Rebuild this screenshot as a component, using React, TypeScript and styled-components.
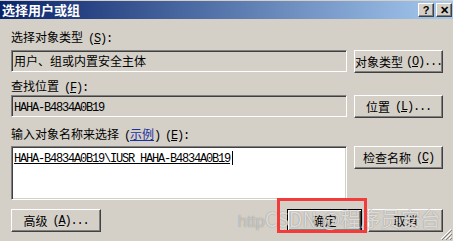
import React from "react"
import styled, { createGlobalStyle } from "styled-components"

const GlobalStyle = createGlobalStyle`
  html, body {
    margin: 0;
    padding: 0;
    background: #d4d0c8;
  }
  body {
    font-family: "Noto Sans CJK SC", "Liberation Sans", sans-serif;
    font-size: 12px;
  }
`

const Window = styled.div`
  position: relative;
  width: 453px;
  height: 241px;
  overflow: hidden;
  background: #d4d0c8;
  color: #000;
`

const TitleBar = styled.div`
  display: flex;
  align-items: center;
  height: 18px;
  margin-top: 1px;
  padding: 0 1px 0 2px;
  background: linear-gradient(to right, #0a246a, #a6caf0);
`

const Title = styled.div`
  color: #fff;
  font-weight: bold;
  font-size: 13px;
  line-height: 18px;
`

const TitleButtons = styled.div`
  display: flex;
  gap: 2px;
  margin-left: auto;
`

const CaptionButton = styled.div`
  width: 14px;
  height: 12px;
  display: flex;
  align-items: center;
  justify-content: center;
  background: #d4d0c8;
  border: 1px solid;
  border-color: #fff #404040 #404040 #fff;
  box-shadow: inset -1px -1px #808080;
  font-family: "Liberation Sans", sans-serif;
  font-weight: bold;
  font-size: 11px;
  line-height: 12px;
`

const Body = styled.div`
  display: flex;
  flex-direction: column;
  padding: 0 10px 0 11px;
`

const Label = styled.div<{ $top: number }>`
  margin-top: ${p => p.$top}px;
  height: 14px;
  line-height: 14px;
  white-space: nowrap;
`

const Mono = styled.span`
  font-family: "Liberation Mono", monospace;
  font-size: 12px;
  letter-spacing: -1.2px;
`

const Gap = styled.span`
  display: inline-block;
  width: 5px;
`

const Link = styled.span`
  color: #1a2fa0;
  text-decoration: underline;
`

const Row = styled.div<{ $top: number }>`
  display: flex;
  align-items: flex-start;
  gap: 7px;
  margin-top: ${p => p.$top}px;
`

const Field = styled.div<{ $h: number; $white?: boolean }>`
  box-sizing: border-box;
  width: 336px;
  height: ${p => p.$h}px;
  padding: 2px 2px;
  background: ${p => (p.$white ? "#fff" : "#d4d0c8")};
  border: 1px solid;
  border-color: #808080 #fff #fff #808080;
  box-shadow: inset 1px 1px #404040, inset -1px -1px #d4d0c8;
  line-height: 16px;
  white-space: nowrap;
  overflow: hidden;
`

const Resolved = styled.span`
  text-decoration: underline;
`

const Caret = styled.span`
  display: inline-block;
  width: 1px;
  height: 14px;
  margin-left: 2px;
  vertical-align: -3px;
  background: #000;
`

const Button = styled.div<{ $w: number; $default?: boolean }>`
  box-sizing: border-box;
  width: ${p => p.$w}px;
  height: 23px;
  display: flex;
  align-items: center;
  justify-content: center;
  background: #d4d0c8;
  border: 1px solid;
  border-color: ${p =>
    p.$default ? "#000" : "#fff #404040 #404040 #fff"};
  box-shadow: ${p =>
    p.$default
      ? "inset 1px 1px #fff, inset -1px -1px #404040, inset -2px -2px #808080"
      : "inset -1px -1px #808080"};
  white-space: nowrap;
  line-height: 14px;
`

const BottomRow = styled.div`
  display: flex;
  margin-top: 9px;
`

const Spacer = styled.div`
  flex: 1;
`

const OkCancel = styled.div`
  display: flex;
  gap: 6px;
`

const Highlight = styled.div`
  position: absolute;
  left: 277px;
  top: 198px;
  width: 84px;
  height: 29px;
  border: 3px solid #f23b3b;
`

const Watermark = styled.div`
  position: absolute;
  left: 238px;
  top: 207px;
  display: flex;
  align-items: baseline;
  white-space: nowrap;
  color: rgba(255, 255, 255, 0.72);
  text-shadow: 0 0 1px rgba(40, 40, 40, 0.55);
  font-size: 20px;
  line-height: 24px;
  pointer-events: none;
`

const WatermarkSmall = styled.span`
  font-family: "Liberation Sans", sans-serif;
  font-size: 16px;
  color: rgba(255, 255, 255, 0.55);
`

const Grip = styled.svg`
  position: absolute;
  right: 1px;
  bottom: 1px;
`

const Key = ({ k }: { k: string }) => (
  <Mono>
    (<u>{k}</u>)
  </Mono>
)

const App = () => (
  <Window>
    <GlobalStyle />
    <TitleBar>
      <Title>选择用户或组</Title>
      <TitleButtons>
        <CaptionButton>?</CaptionButton>
        <CaptionButton>✕</CaptionButton>
      </TitleButtons>
    </TitleBar>
    <Body>
      <Label $top={11}>
        选择对象类型<Gap />
        <Key k="S" />
        <Mono>:</Mono>
      </Label>
      <Row $top={6}>
        <Field $h={22}>用户、组或内置安全主体</Field>
        <Button $w={89}>
          对象类型<Gap />
          <Key k="O" />
          <Mono>...</Mono>
        </Button>
      </Row>
      <Label $top={6}>
        查找位置<Gap />
        <Key k="F" />
        <Mono>:</Mono>
      </Label>
      <Row $top={2}>
        <Field $h={22}>
          <Mono>HAHA-B4834A0B19</Mono>
        </Field>
        <Button $w={89}>
          位置<Gap />
          <Key k="L" />
          <Mono>...</Mono>
        </Button>
      </Row>
      <Label $top={9}>
        输入对象名称来选择<Gap />
        <Mono>(</Mono>
        <Link>示例</Link>
        <Mono>)</Mono>
        <Gap />
        <Key k="E" />
        <Mono>:</Mono>
      </Label>
      <Row $top={5}>
        <Field $h={54} $white>
          <Resolved>
            <Mono>HAHA-B4834A0B19\IUSR_HAHA-B4834A0B19</Mono>
          </Resolved>
          <Caret />
        </Field>
        <Button $w={89}>
          检查名称<Gap />
          <Key k="C" />
        </Button>
      </Row>
      <BottomRow>
        <Button $w={90}>
          高级<Gap />
          <Key k="A" />
          <Mono>...</Mono>
        </Button>
        <Spacer />
        <OkCancel>
          <Button $w={75} $default>
            确定
          </Button>
          <Button $w={75}>取消</Button>
        </OkCancel>
      </BottomRow>
    </Body>
    <Watermark>
      <WatermarkSmall>http</WatermarkSmall>
      <span>CSDN @程序员安台</span>
    </Watermark>
    <Highlight />
    <Grip width="12" height="12" viewBox="0 0 12 12">
      <path d="M11 1 L1 11 M11 5 L5 11 M11 9 L9 11" stroke="#fff" strokeWidth="1" />
      <path d="M12 2 L2 12 M12 6 L6 12 M12 10 L10 12" stroke="#808080" strokeWidth="1" />
    </Grip>
  </Window>
)

export default App
